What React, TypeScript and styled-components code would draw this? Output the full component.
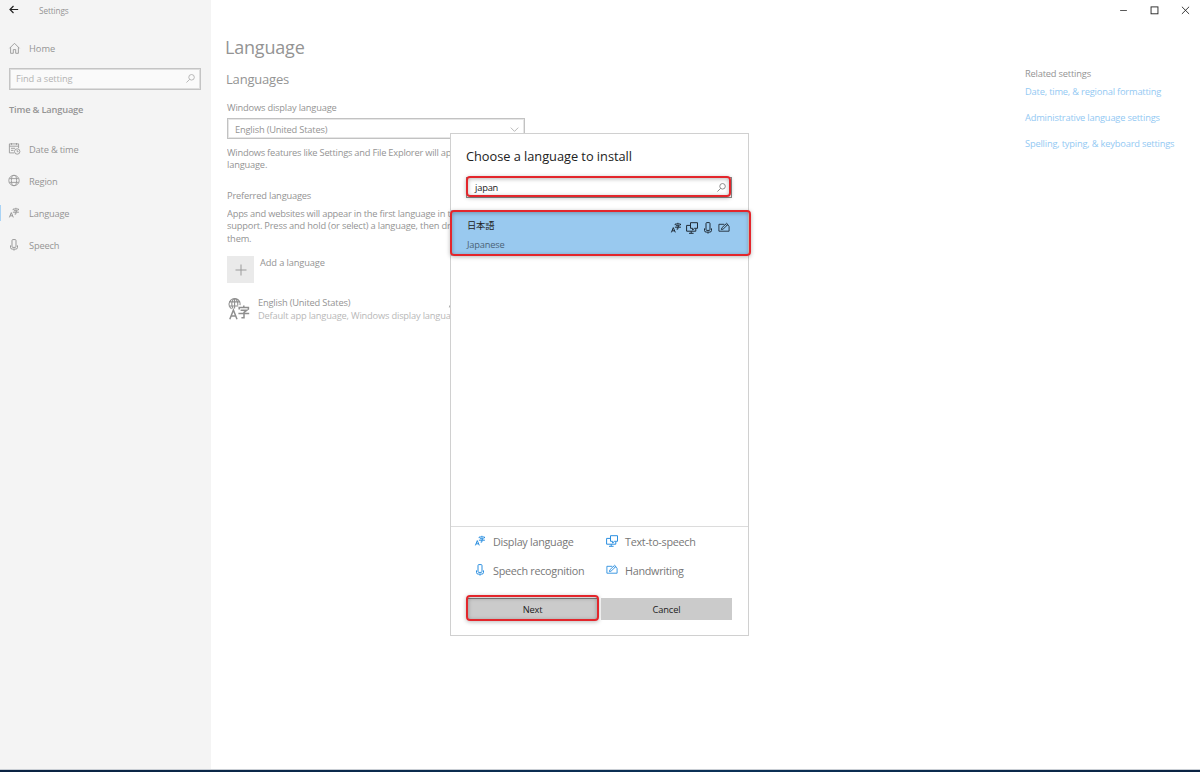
import React from 'react';
import styled, { createGlobalStyle } from 'styled-components';

const GlobalStyle = createGlobalStyle`
  * { box-sizing: border-box; }
  body { margin: 0; background: #fff; overflow: hidden; }
  body, button, input { font-family: "Open Sans", "Noto Sans", "Noto Sans CJK JP", sans-serif; }
  svg { display: block; flex: none; overflow: visible; }
`;

const Window = styled.div`
  position: relative;
  display: flex;
  flex-direction: column;
  width: 1200px;
  height: 772px;
  background: #fff;
  overflow: hidden;
`;
const Body = styled.div`
  display: flex;
  flex: 1;
  min-height: 0;
`;
const Taskbar = styled.div`
  height: 3px;
  border-top: 1px solid #c9ced4;
  background: linear-gradient(90deg, #0a2342, #0b3157 60%, #0a2342);
`;

const Text = styled.span<{ $size?: number; $track?: number; $color?: string; $weight?: number }>`
  font-size: ${p => p.$size ?? 9.3}px;
  letter-spacing: ${p => p.$track ?? -0.19}px;
  color: ${p => p.$color ?? '#949494'};
  font-weight: ${p => p.$weight ?? 400};
  white-space: nowrap;
`;

const Sidebar = styled.nav`
  width: 211px;
  flex: none;
  background: #f4f4f4;
`;
const SidebarTitle = styled.div`
  display: flex;
  align-items: center;
  gap: 20px;
  height: 20px;
  padding-left: 9px;
`;
const NavRow = styled.div<{ $active?: boolean }>`
  display: flex;
  align-items: center;
  gap: 9px;
  height: 32px;
  padding-left: 8px;
  background: linear-gradient(#a9d3f5, #a9d3f5) 0 50% / ${p => (p.$active ? 1 : 0)}px 16px no-repeat;
`;
const HomeRow = styled(NavRow)`
  margin-top: 12px;

  svg { margin-bottom: 1px; }
`;
const SettingSearch = styled.div`
  display: flex;
  align-items: center;
  justify-content: space-between;
  width: 192px;
  height: 22px;
  margin: 4px 0 0 9px;
  padding: 0 5px 1px 6px;
  border: 1px solid #c4c4c4;
  outline: 1px solid #dedede;
  outline-offset: -2px;
  background: #fafafa;
`;
const SectionName = styled.div`
  display: flex;
  align-items: center;
  height: 20px;
  margin: 9px 0 14px;
  padding-left: 9px;
`;

const Main = styled.main`
  display: flex;
  flex-direction: column;
  flex: 1;
  padding-left: 16px;
`;
const Line = styled.div<{ $h: number; $top?: number; $pull?: number }>`
  display: flex;
  align-items: center;
  height: ${p => p.$h}px;
  margin-top: ${p => p.$top ?? 0}px;
  margin-left: ${p => -(p.$pull ?? 0)}px;
`;
const ClippedLine = styled(Line)`
  width: 223px;
  overflow: hidden;
`;
const Select = styled.div`
  display: flex;
  align-items: center;
  justify-content: space-between;
  width: 298px;
  height: 21px;
  margin-top: 4px;
  padding: 1px 5px 0 7px;
  border: 1px solid #c2c2c2;
  outline: 1px solid #e6e6e6;
  outline-offset: -2px;
`;
const AddRow = styled.div`
  display: flex;
  gap: 6px;
  height: 27px;
  margin-top: 12px;
`;
const AddTile = styled.div`
  display: grid;
  place-items: center;
  width: 27px;
  height: 27px;
  background: #eaeaea;
`;
const InstalledRow = styled.div`
  display: flex;
  width: 223px;
  height: 27px;
  margin-top: 13px;
  overflow: hidden;
`;
const InstalledBadge = styled.div`
  padding-top: 1px;
`;
const InstalledText = styled.div`
  display: flex;
  flex-direction: column;
  flex: none;
  width: 190px;
  margin-left: 8px;
`;
const InstalledName = styled(Line)`
  justify-content: space-between;
  width: 202px;
`;

const Aside = styled.aside`
  width: 175px;
  flex: none;
`;
const WindowControls = styled.div`
  display: flex;
  align-items: center;
  justify-content: flex-end;
  gap: 22px;
  height: 20px;
  margin-right: 10px;
`;
const RelatedTitle = styled.div`
  display: flex;
  align-items: center;
  height: 18px;
  margin-top: 44px;
`;
const Link = styled.div`
  display: flex;
  align-items: center;
  height: 18px;
  margin-bottom: 8px;
`;

const Dialog = styled.section`
  position: absolute;
  left: 450px;
  top: 133px;
  width: 299px;
  height: 503px;
  display: flex;
  flex-direction: column;
  border: 1px solid #d0d0d0;
  background: #fff;
`;
const DialogTitle = styled.h1`
  display: flex;
  align-items: center;
  height: 20px;
  margin: 12px 0 0 15px;
`;
const DialogSearch = styled.div`
  position: relative;
  display: flex;
  align-items: center;
  justify-content: space-between;
  width: 266px;
  height: 21px;
  margin: 11px 0 0 15px;
  padding: 0 5px 0 8px;
  border: 1px solid #8c8c8c;
  background: #fff;
`;
const Highlight = styled.div<{ $inset: string }>`
  position: absolute;
  inset: ${p => p.$inset};
  border: 2px solid #e3262c;
  border-radius: 4px;
  box-shadow: 0 1px 4px rgba(0, 0, 0, 0.28), inset 0 1px 4px rgba(0, 0, 0, 0.28);
  pointer-events: none;
`;
const Result = styled.div`
  position: relative;
  display: flex;
  justify-content: space-between;
  height: 46px;
  margin-top: 12px;
  padding: 0 18px 0 16px;
  background: #99c9ef;
`;
const ResultNames = styled.div`
  display: flex;
  flex-direction: column;
  padding-top: 5px;
`;
const ResultIcons = styled.div`
  display: flex;
  align-items: center;
  gap: 4px;
  height: 12px;
  margin-top: 12px;
`;
const Legend = styled.div`
  display: grid;
  grid-template-columns: 132px 1fr;
  grid-auto-rows: 29px;
  margin-top: auto;
  padding: 0 0 0 23px;
  height: 72px;
  border-top: 1px solid #dcdcdc;
`;
const LegendItem = styled.div`
  display: flex;
  align-items: center;
  gap: 7px;

  svg { margin-bottom: 2px; }
`;
const Actions = styled.div`
  display: flex;
  gap: 3px;
  height: 37px;
  padding-left: 16px;
`;
const Button = styled.button`
  position: relative;
  display: flex;
  align-items: center;
  justify-content: center;
  width: 131px;
  height: 22px;
  padding: 1px 0 0;
  border: 0;
  background: #cbcbcb;
`;
const FocusedButton = styled(Button)`
  border: 1px solid #7f7f7f;
`;

type IconProps = { color?: string; size?: number };

const Svg = ({ color = '#999', size = 12, sw = 1, children }: IconProps & { sw?: number; children: React.ReactNode }) => (
  <svg width={size} height={size} viewBox="0 0 12 12" fill="none" stroke={color} strokeWidth={sw}>
    {children}
  </svg>
);
const BackIcon = () => (
  <Svg color="#222" size={10} sw={1.4}><path d="M11 5.4H1.2M5.4 1.2L1.2 5.4l4.2 4.2" /></Svg>
);
const HomeIcon = () => (
  <Svg sw={0.9}><path d="M1.5 6.3L6.5 1.3l5 5M2.6 5.3v6h2.7V7.6h2.4v3.7h2.7v-6" /></Svg>
);
const SearchIcon = ({ color = '#aaa', size = 9 }: IconProps) => (
  <Svg color={color} size={size} sw={1.1}><circle cx="7.4" cy="4.4" r="3.7" /><path d="M4.8 7.2L.6 11.4" /></Svg>
);
const CalendarIcon = () => (
  <Svg sw={0.9}>
    <path d="M6 9.9H1.4V.9h9.2v4.2M1.4 3.2h9.2M3.5 0v1.9M8.5 0v1.9M3 5.3h4M3 7.4h2.5" />
    <circle cx="9.2" cy="8.5" r="2.7" /><path d="M9.2 7v1.7h1.3" />
  </Svg>
);
const GlobeIcon = () => (
  <Svg sw={0.9}>
    <circle cx="6" cy="5.5" r="5.2" /><ellipse cx="6" cy="5.5" rx="2.6" ry="5.2" /><path d="M1.3 3.6h9.4M1.3 7.4h9.4" />
  </Svg>
);
const LanguageIcon = ({ color = '#999', size = 12 }: IconProps) => (
  <Svg color={color} size={size} sw={1}>
    <path d="M1.4 10.4L3.3 5.6l2 4.8M2 8.8h2.7M5.2 3.2V2h5.3v1.2M7.9.8V2M6 3.7h3.4L7.9 4.7v2.4H6.6M4.9 5.2h6" />
  </Svg>
);
const MicIcon = ({ color = '#999', size = 12 }: IconProps) => (
  <Svg color={color} size={size}>
    <rect x="4" y=".6" width="4" height="7.8" rx=".9" />
    <path d="M2.5 6.4v2q0 1.7 1.7 1.7h3.6q1.7 0 1.7-1.7v-2M6 10.1v1.5" />
  </Svg>
);
const ScreenSpeechIcon = ({ color, size = 12 }: IconProps) => (
  <Svg color={color} size={size}>
    <path d="M4.5.7h7v5.6H8.6L6.6 8V6.3H4.5zM4.5 3.4H.6v5.8h9.2V6.8M5.2 9.2v2M3 11.3h4.6" />
  </Svg>
);
const HandwritingIcon = ({ color, size = 12 }: IconProps) => (
  <Svg color={color} size={size} sw={0.9}>
    <path d="M6.3 2.3H.9v6.9h10.2V4.6L9.6 2.3M3.4 7.6l.5-1.8L8.6 1.3l1.3 1.2-4.8 4.6zM7.6 2.3l1.2 1.3" />
  </Svg>
);
const PlusIcon = () => (
  <Svg color="#9a9a9a"><path d="M6 .5v11M.5 6h11" /></Svg>
);
const ChevronIcon = () => (
  <Svg color="#aaa" size={9} sw={1.1}><path d="M1 3.5l5 5 5-5" /></Svg>
);
const InstalledLanguageIcon = () => (
  <svg width="23" height="24" viewBox="0 0 23 24" fill="none" stroke="#8f8f8f" strokeWidth="1.1">
    <path d="M4.6 11.7A5.5 5.5 0 1 1 13 8.2M2 4.9h11.2M1.8 9h9.4M7.6 1.4v10M7.2 1.4C4.2 4 4.2 8.5 6 11.4M8 1.4c2.4 2 3 4.4 2.8 6.9" />
    <path d="M2.8 22.2L6.4 13l3.6 9.2M4.1 19h4.7" strokeWidth="1.5" />
    <path d="M12.2 12.4v-2h9.2v2M16.8 8.6v1.8M13.6 13.2h6.2L17 15.4v5.4h-2.6M11.4 16.6h10.8" strokeWidth="1.5" />
  </svg>
);
const MinimizeIcon = () => <Svg color="#222" size={9}><path d="M1.5 6h9" /></Svg>;
const MaximizeIcon = () => <Svg color="#222" size={9} sw={1.2}><rect x="1.4" y="1.2" width="9.2" height="9.2" /></Svg>;
const CloseIcon = () => <Svg color="#222" size={9} sw={1.2}><path d="M1.2 1l9.6 9.6M10.8 1L1.2 10.6" /></Svg>;

const navItems = [
  { label: 'Date & time', icon: <CalendarIcon /> },
  { label: 'Region', icon: <GlobeIcon /> },
  { label: 'Language', icon: <LanguageIcon />, active: true },
  { label: 'Speech', icon: <MicIcon /> },
];
const links = ['Date, time, & regional formatting', 'Administrative language settings', 'Spelling, typing, & keyboard settings'];
const blue = '#2b8fe0';
const legend = [
  { label: 'Display language', icon: <LanguageIcon color={blue} /> },
  { label: 'Text-to-speech', icon: <ScreenSpeechIcon color={blue} /> },
  { label: 'Speech recognition', icon: <MicIcon color={blue} /> },
  { label: 'Handwriting', icon: <HandwritingIcon color={blue} /> },
];

export default function App() {
  return (
    <Window>
      <GlobalStyle />
      <Body>
        <Sidebar>
          <SidebarTitle><BackIcon /><Text $size={8.2} $track={-0.1}>Settings</Text></SidebarTitle>
          <HomeRow><HomeIcon /><Text $track={0}>Home</Text></HomeRow>
          <SettingSearch><Text $color="#b3b3b3" $track={-0.1}>Find a setting</Text><SearchIcon /></SettingSearch>
          <SectionName><Text $weight={600}>Time &amp; Language</Text></SectionName>
          {navItems.map(item => (
            <NavRow key={item.label} $active={item.active}>{item.icon}<Text>{item.label}</Text></NavRow>
          ))}
        </Sidebar>
        <Main>
          <Line $h={26} $top={34} $pull={2}><Text $size={18}>Language</Text></Line>
          <Line $h={20} $top={9} $pull={1}><Text $size={13}>Languages</Text></Line>
          <Line $h={14} $top={11}><Text>Windows display language</Text></Line>
          <Select><Text>English (United States)</Text><ChevronIcon /></Select>
          <ClippedLine $h={12} $top={7}><Text $track={-0.23}>Windows features like Settings and File Explorer will ap</Text></ClippedLine>
          <Line $h={12}><Text>language.</Text></Line>
          <Line $h={14} $top={18}><Text>Preferred languages</Text></Line>
          <ClippedLine $h={12} $top={5}><Text $track={-0.21}>Apps and websites will appear in the first language in t</Text></ClippedLine>
          <ClippedLine $h={13}><Text>support. Press and hold (or select) a language, then dr</Text></ClippedLine>
          <Line $h={12}><Text>them.</Text></Line>
          <AddRow><AddTile><PlusIcon /></AddTile><Line $h={13}><Text $track={-0.13}>Add a language</Text></Line></AddRow>
          <InstalledRow>
            <InstalledBadge><InstalledLanguageIcon /></InstalledBadge>
            <InstalledText>
              <InstalledName $h={13}><Text>English (United States)</Text><LanguageIcon /></InstalledName>
              <Line $h={13}><Text $color="#b8b8b8">Default app language, Windows display langua</Text></Line>
            </InstalledText>
          </InstalledRow>
        </Main>
        <Aside>
          <WindowControls><MinimizeIcon /><MaximizeIcon /><CloseIcon /></WindowControls>
          <RelatedTitle><Text>Related settings</Text></RelatedTitle>
          {links.map(label => <Link key={label}><Text $color="#93c9f3" $track={-0.19}>{label}</Text></Link>)}
        </Aside>
      </Body>
      <Taskbar />

      <Dialog>
        <DialogTitle><Text $size={12.8} $track={-0.03} $color="#222">Choose a language to install</Text></DialogTitle>
        <DialogSearch>
          <Text $color="#222">japan</Text>
          <SearchIcon color="#777" />
          <Highlight $inset="-2px 0 0 -1px" />
        </DialogSearch>
        <Result>
          <ResultNames>
            <Line $h={19}><Text $color="#222">日本語</Text></Line>
            <Line $h={20}><Text $color="#4b6377">Japanese</Text></Line>
          </ResultNames>
          <ResultIcons>
            <LanguageIcon color="#1f2b36" />
            <ScreenSpeechIcon color="#1f2b36" />
            <MicIcon color="#1f2b36" />
            <HandwritingIcon color="#1f2b36" />
          </ResultIcons>
          <Highlight $inset="0 -3px 0 -1px" />
        </Result>
        <Legend>
          {legend.map(item => (
            <LegendItem key={item.label}>{item.icon}<Text $size={10.8} $track={-0.28} $color="#777">{item.label}</Text></LegendItem>
          ))}
        </Legend>
        <Actions>
          <FocusedButton><Text $color="#222">Next</Text><Highlight $inset="-4px -2px -2px -2px" /></FocusedButton>
          <Button><Text $color="#222" $track={-0.1}>Cancel</Text></Button>
        </Actions>
      </Dialog>
    </Window>
  );
}
